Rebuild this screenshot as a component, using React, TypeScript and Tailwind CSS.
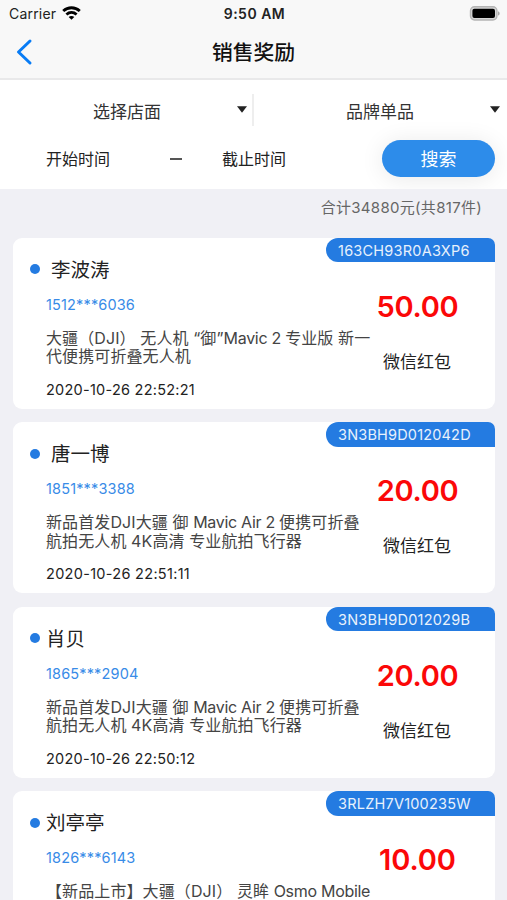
import React from "react";

type Reward = {
  name: string;
  nameClass: string;
  phone: string;
  lines: { key: string; body: React.ReactNode }[];
  time?: string;
  timeClass?: string;
  method?: string;
  serial: string;
  serialClass: string;
  amount: string;
  amountClass: string;
};

function Latin({ children }: { children: React.ReactNode }) {
  return <span className="tracking-[-0.3px]">{children}</span>;
}

const airLines = [
  { key: "a", body: <>新品首发DJI大疆 御 <Latin>Mavic Air 2 </Latin>便携可折叠</> },
  { key: "b", body: <>航拍无人机 4K高清 专业航拍飞行器</> },
];

const rewards: Reward[] = [
  {
    name: "李波涛",
    nameClass: "pl-[11px]",
    phone: "1512***6036",
    lines: [
      { key: "a", body: <>大疆（DJI） 无人机 “御”<Latin>Mavic 2 </Latin>专业版 新一</> },
      { key: "b", body: <>代便携可折叠无人机</> },
    ],
    time: "2020-10-26 22:52:21",
    timeClass: "tracking-[0.25px]",
    method: "微信红包",
    serial: "163CH93R0A3XP6",
    serialClass: "tracking-[0.23px]",
    amount: "50.00",
    amountClass: "tracking-[-0.3px]",
  },
  {
    name: "唐一博",
    nameClass: "pl-[11px]",
    phone: "1851***3388",
    lines: airLines,
    time: "2020-10-26 22:51:11",
    timeClass: "tracking-[0.3px]",
    method: "微信红包",
    serial: "3N3BH9D012042D",
    serialClass: "tracking-[0.18px]",
    amount: "20.00",
    amountClass: "tracking-[-0.3px]",
  },
  {
    name: "肖贝",
    nameClass: "pl-[6px]",
    phone: "1865***2904",
    lines: airLines,
    time: "2020-10-26 22:50:12",
    timeClass: "tracking-[0.25px]",
    method: "微信红包",
    serial: "3N3BH9D012029B",
    serialClass: "tracking-[0.23px]",
    amount: "20.00",
    amountClass: "tracking-[-0.3px]",
  },
  {
    name: "刘亭亭",
    nameClass: "pl-[6px]",
    phone: "1826***6143",
    lines: [{ key: "a", body: <>【新品上市】大疆（DJI） 灵眸 <Latin>Osmo Mobile</Latin></> }],
    serial: "3RLZH7V100235W",
    serialClass: "tracking-[0.22px]",
    amount: "10.00",
    amountClass: "tracking-[-0.1px]",
  },
];

function StatusBar() {
  return (
    <div className="grid h-7 grid-cols-3 items-center pr-[7px] pl-[9px] text-[14px] leading-none text-[#222]">
      <div className="flex items-center gap-[6px]">
        <span className="tracking-[0.2px]">Carrier</span>
        <svg className="-mt-[2px]" width="19" height="14" viewBox="0 0 19 14" fill="none" stroke="#000" strokeWidth="2.8">
          <path d="M1.2 5.1C6 .6 13 .6 17.8 5.1" />
          <path d="M4.4 8.5c3-2.7 7.2-2.7 10.2 0" />
          <path d="M9.5 13.8 6.7 11c1.6-1.4 4-1.4 5.6 0z" fill="#000" stroke="none" />
        </svg>
      </div>
      <span className="text-center font-semibold tracking-[0.5px]">9:50 AM</span>
      <svg className="-mt-[2px] justify-self-end" width="31" height="15" viewBox="0 0 31 15">
        <rect x="1.5" y="0.8" width="26.4" height="13.2" rx="4" fill="#d8d8d8" stroke="#b4b4b4" strokeWidth="1.4" />
        <rect x="3.4" y="2.8" width="22.6" height="9.2" rx="2" fill="#000" />
        <path d="M29 5.2c2.2.8 2.2 3.6 0 4.4z" fill="#aaa" />
      </svg>
    </div>
  );
}

function Caret() {
  return (
    <svg className="-mt-[2px]" width="10" height="7" viewBox="0 0 10 7">
      <path d="M0 .3h10L5 6.8z" fill="#222" />
    </svg>
  );
}

function Filters() {
  return (
    <section className="h-[109px] shrink-0 overflow-hidden bg-white pt-[14px] text-[#333]">
      <div className="flex h-8 items-center text-[17px]">
        <div className="flex h-8 w-[254px] items-center justify-between border-r-2 border-[#eee] pr-[5px] pl-[93px]">
          <span className="pt-[6px]">选择店面</span>
          <Caret />
        </div>
        <div className="flex h-8 flex-1 items-center justify-between pr-[7px] pl-[92px]">
          <span className="pt-[6px]">品牌单品</span>
          <Caret />
        </div>
      </div>
      <div className="mt-[14px] flex h-[37px] items-center pr-[12px] pl-[46px] text-[16px] text-[#222]">
        <span className="w-[124px]">开始时间</span>
        <span className="h-[2px] w-3 bg-[#555]" />
        <span className="ml-10">截止时间</span>
        <button className="ml-auto h-[37px] w-[113px] rounded-full bg-[#2d8cea] pt-[2px] text-[18px] text-white shadow-[0_2px_24px_rgba(0,0,0,0.09)]">
          搜索
        </button>
      </div>
    </section>
  );
}

function RewardCard({ item }: { item: Reward }) {
  return (
    <article className="relative flex h-[171px] shrink-0 rounded-[9px] bg-white">
      <div className="flex w-[358px] flex-col">
        <div className="mt-[18px] flex h-[27px] items-center pl-[17px]">
          <span className="size-[10px] rounded-full bg-[#247be1]" />
          <span className={"pt-[2px] text-[19.5px] text-[#222] " + item.nameClass}>{item.name}</span>
        </div>
        <div className="flex flex-col pl-[33px] whitespace-nowrap">
          <span className="mt-[12px] text-[14.5px] leading-[20px] tracking-[0.15px] text-[#388be7]">{item.phone}</span>
          <div className="mt-[14px] text-[16px] leading-[18.5px] tracking-[0.1px] text-[#444]">
            {item.lines.map((line) => (
              <p key={line.key} className="w-max">{line.body}</p>
            ))}
          </div>
          {item.time && (
            <time className={"mt-[14px] text-[14.5px] leading-[20px] text-[#222] " + item.timeClass}>{item.time}</time>
          )}
        </div>
      </div>
      <div className="flex w-[93px] flex-col items-center">
        <span className={"mt-[51px] text-[29px] leading-[36px] font-semibold text-[#fb0808] " + item.amountClass}>{item.amount}</span>
        {item.method && (
          <span className="mt-[25px] mr-[1px] text-[17px] leading-[24px] text-[#222]">{item.method}</span>
        )}
      </div>
      <div className="absolute top-0 right-0 flex h-[24.5px] w-[169px] items-center rounded-tl-[12.25px] rounded-tr-[7px] rounded-bl-[12.25px] bg-[#247be1] pt-[1px] pl-[12.5px] text-[14.5px] text-[#e8f1fc]">
        <span className={item.serialClass}>{item.serial}</span>
      </div>
    </article>
  );
}

export default function App() {
  return (
    <main className="flex h-[900px] w-[507px] flex-col overflow-hidden bg-[#f0f0f5] font-[Inter,'Noto_Sans_CJK_SC',sans-serif]">
      <header className="h-20 shrink-0 border-b-2 border-[#e9e9ea] bg-[#f8f8f8]">
        <StatusBar />
        <div className="grid h-[49px] grid-cols-[100px_1fr_100px] items-center">
          <svg className="-mt-px ml-[15px]" width="18" height="28" viewBox="0 0 18 28" fill="none">
            <path d="M15 3 3.5 14 15 25" stroke="#087cf5" strokeWidth="3" strokeLinecap="round" strokeLinejoin="round" />
          </svg>
          <h1 className="pt-[1px] text-center text-[20.8px] font-medium text-[#111]">销售奖励</h1>
        </div>
      </header>
      <Filters />
      <p className="flex h-[48.7px] shrink-0 items-start justify-end pt-[8px] pr-[25px] text-[15px] leading-[22px] tracking-[0.3px] text-[#666]">
        合计34880元(共817件)
      </p>
      <div className="flex flex-col gap-[13.5px] pr-[12.5px] pl-[13px]">
        {rewards.map((item) => (
          <RewardCard key={item.serial} item={item} />
        ))}
      </div>
    </main>
  );
}
